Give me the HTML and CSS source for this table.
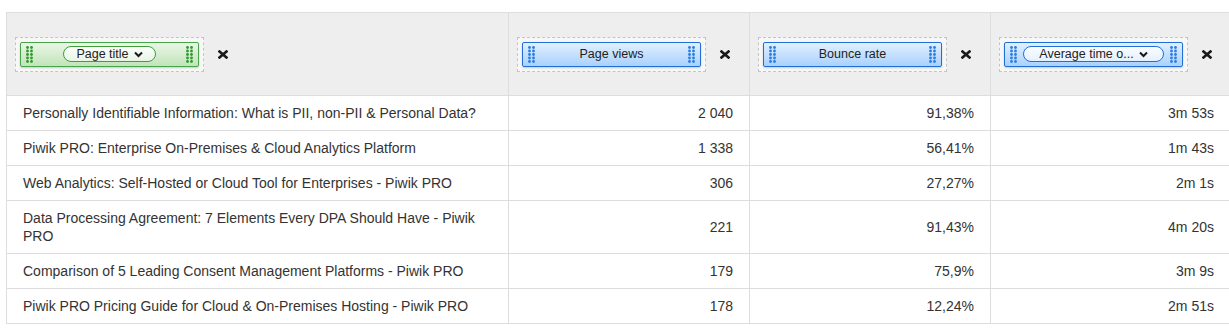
FILE: index.html
```html
<!DOCTYPE html>
<html>
<head>
<meta charset="utf-8">
<link rel="stylesheet" href="styles.css">
</head>
<body>
<svg width="0" height="0" class="defs">
  <defs>
    <g id="grip">
      <circle cx="1.5" cy="1.5" r="1.4"/><circle cx="5.5" cy="1.5" r="1.4"/>
      <circle cx="1.5" cy="5" r="1.4"/><circle cx="5.5" cy="5" r="1.4"/>
      <circle cx="1.5" cy="8.5" r="1.4"/><circle cx="5.5" cy="8.5" r="1.4"/>
      <circle cx="1.5" cy="12" r="1.4"/><circle cx="5.5" cy="12" r="1.4"/>
      <circle cx="1.5" cy="15.5" r="1.4"/><circle cx="5.5" cy="15.5" r="1.4"/>
    </g>
    <g id="close"><path d="M1.5 1.5 L8.5 7.5 M8.5 1.5 L1.5 7.5" stroke="#1a1a1a" stroke-width="2.6" stroke-linecap="square" fill="none"/></g>
    <g id="chev"><path d="M1 1.5 L4.5 5 L8 1.5" stroke="#1a1a1a" stroke-width="2" fill="none"/></g>
  </defs>
</svg>
<div class="grid">
  <div class="th">
    <div class="slot">
      <div class="pill green">
        <svg class="grip" width="7" height="17"><use href="#grip"/></svg>
        <span class="oval green-oval">Page title <svg class="chev" width="9" height="7"><use href="#chev"/></svg></span>
        <svg class="grip" width="7" height="17"><use href="#grip"/></svg>
      </div>
    </div>
    <svg class="x" width="10" height="9"><use href="#close"/></svg>
  </div>
  <div class="th">
    <div class="slot">
      <div class="pill blue">
        <svg class="grip" width="7" height="17"><use href="#grip"/></svg>
        <span class="label">Page views</span>
        <svg class="grip" width="7" height="17"><use href="#grip"/></svg>
      </div>
    </div>
    <svg class="x" width="10" height="9"><use href="#close"/></svg>
  </div>
  <div class="th">
    <div class="slot">
      <div class="pill blue">
        <svg class="grip" width="7" height="17"><use href="#grip"/></svg>
        <span class="label">Bounce rate</span>
        <svg class="grip" width="7" height="17"><use href="#grip"/></svg>
      </div>
    </div>
    <svg class="x" width="10" height="9"><use href="#close"/></svg>
  </div>
  <div class="th last">
    <div class="slot">
      <div class="pill blue">
        <svg class="grip" width="7" height="17"><use href="#grip"/></svg>
        <span class="oval blue-oval wide">Average time o... <svg class="chev" width="9" height="7"><use href="#chev"/></svg></span>
        <svg class="grip" width="7" height="17"><use href="#grip"/></svg>
      </div>
    </div>
    <svg class="x" width="10" height="9"><use href="#close"/></svg>
  </div>

  <div class="td">Personally Identifiable Information: What is PII, non-PII &amp; Personal Data?</div>
  <div class="td num">2 040</div><div class="td num">91,38%</div><div class="td num last">3m 53s</div>

  <div class="td">Piwik PRO: Enterprise On-Premises &amp; Cloud Analytics Platform</div>
  <div class="td num">1 338</div><div class="td num">56,41%</div><div class="td num last">1m 43s</div>

  <div class="td">Web Analytics: Self-Hosted or Cloud Tool for Enterprises - Piwik PRO</div>
  <div class="td num">306</div><div class="td num">27,27%</div><div class="td num last">2m 1s</div>

  <div class="td">Data Processing Agreement: 7 Elements Every DPA Should Have - Piwik PRO</div>
  <div class="td num">221</div><div class="td num">91,43%</div><div class="td num last">4m 20s</div>

  <div class="td">Comparison of 5 Leading Consent Management Platforms - Piwik PRO</div>
  <div class="td num">179</div><div class="td num">75,9%</div><div class="td num last">3m 9s</div>

  <div class="td">Piwik PRO Pricing Guide for Cloud &amp; On-Premises Hosting - Piwik PRO</div>
  <div class="td num">178</div><div class="td num">12,24%</div><div class="td num last">2m 51s</div>
</div>
</body>
</html>
```

FILE: styles.css
```css
html, body {
  margin: 0;
  padding: 0;
  overflow: hidden;
  background: #ffffff;
}
body {
  padding: 12px 0 0 6px;
  font-family: "Liberation Sans", Arial, sans-serif;
  color: #333333;
}
.defs { position: absolute; }
.grid {
  display: grid;
  grid-template-columns: 502px 241px 241px 239px;
  border-top: 1px solid #dddddd;
  border-left: 1px solid #dddddd;
  width: 1224px;
  box-sizing: border-box;
}
.th {
  height: 83px;
  box-sizing: border-box;
  background: #eeeeee;
  border-right: 1px solid #dddddd;
  border-bottom: 1px solid #dddddd;
  display: flex;
  align-items: center;
  padding-left: 8px;
  gap: 14px;
}
.slot {
  width: 189px;
  height: 35px;
  box-sizing: border-box;
  border: 1px dashed #c4c4c4;
  background: #f7f7f7;
  padding: 4px;
  display: flex;
}
.pill {
  flex: 1;
  box-sizing: border-box;
  height: 25px;
  border-radius: 2px;
  display: flex;
  align-items: center;
  justify-content: space-between;
  padding: 0 5px 0 5px;
  font-size: 12.5px;
  color: #222222;
  box-shadow: 0 1px 2px rgba(0,0,0,0.18);
}
.pill.green {
  border: 1px solid #47a447;
  background: linear-gradient(#eaf6e6, #c2e4ba);
  fill: #2c9a2c;
}
.pill.blue {
  border: 1px solid #1f6fd6;
  background: linear-gradient(#e1f0ff, #a9d1fc);
  fill: #2b7de0;
}
.grip { display: block; }
.label { flex: 1; text-align: center; }
.oval {
  height: 16px;
  box-sizing: border-box;
  border-radius: 8px;
  display: flex;
  align-items: center;
  justify-content: center;
  gap: 5px;
  padding: 0 10px;
  width: 93px;
  white-space: nowrap;
}
.oval.wide { width: 141px; }
.green-oval {
  border: 1px solid #3f9f3f;
  background: linear-gradient(#fbfefb, #e8f5e4);
}
.blue-oval {
  border: 1px solid #1f6fd6;
  background: linear-gradient(#fbfdff, #e4f1ff);
}
.chev { display: block; }
.x { display: block; }
.td {
  box-sizing: border-box;
  border-right: 1px solid #dddddd;
  border-bottom: 1px solid #dddddd;
  padding: 8px 16px;
  font-size: 14px;
  line-height: 18px;
  color: #333333;
  display: flex;
  align-items: center;
}
.td.num { justify-content: flex-end; }
.last { border-right: none; }
```
